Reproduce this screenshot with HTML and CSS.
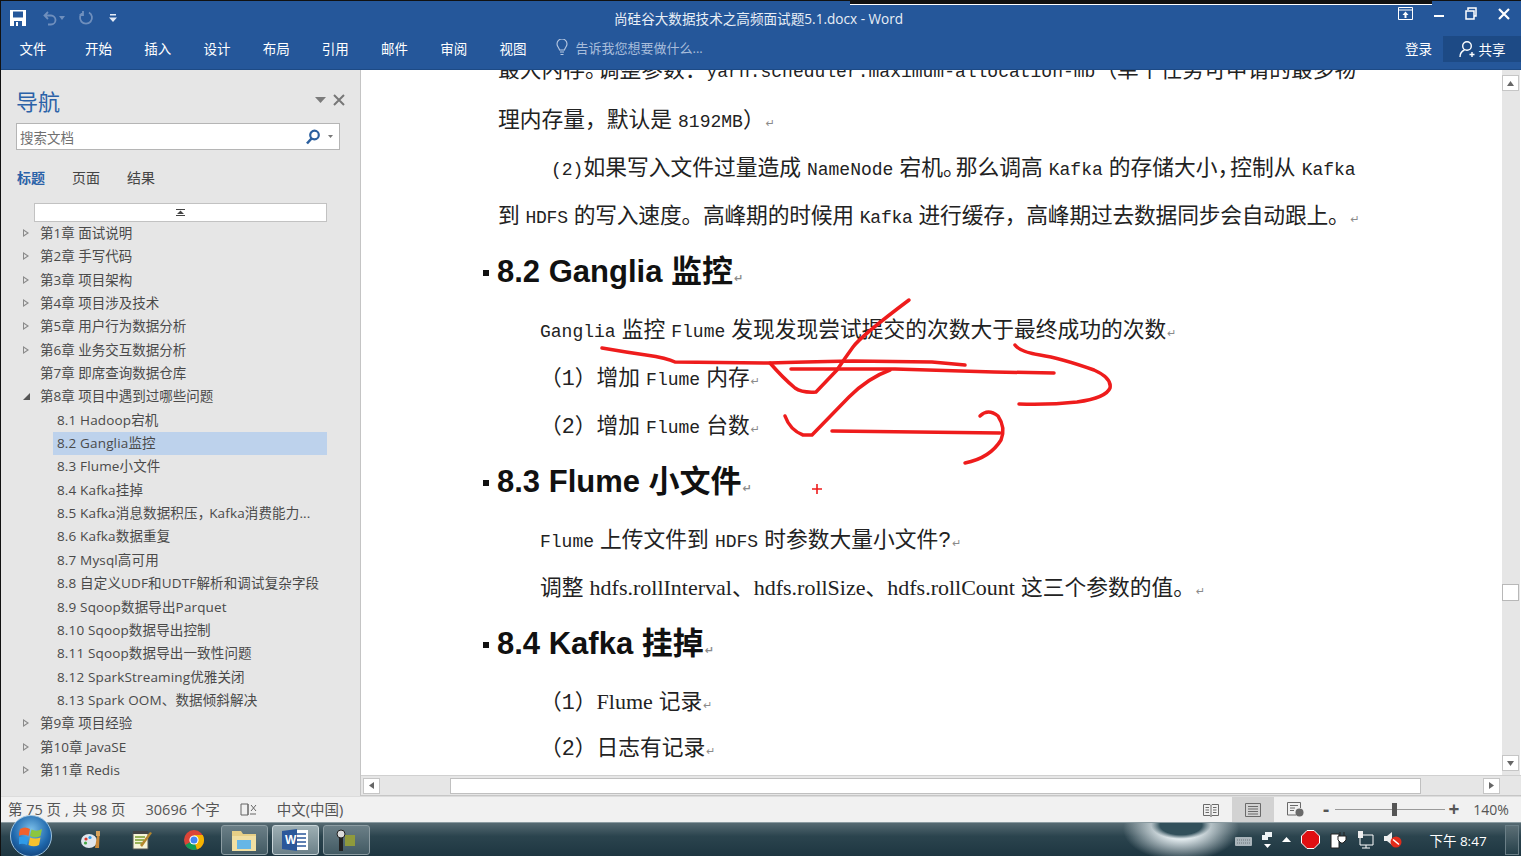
FILE: index.html
```html
<!DOCTYPE html>
<html lang="zh-CN">
<head>
  <meta charset="UTF-8">
  <title>尚硅谷大数据技术之高频面试题5.1.docx - Word</title>
  <link rel="stylesheet" href="styles.css">
</head>
<body>
  <div class="app">
    <!-- title bar -->
    <header class="titlebar">
      <div class="qat">
        <svg class="qat-save" width="18" height="18" viewBox="0 0 18 18"><path d="M1 1h16v16H1z" fill="#fff"/><path d="M4 2.500h10v6H4z" fill="#25579a"/><path d="M5 12h8v5H5z" fill="#25579a"/><path d="M7 13h2v4H7z" fill="#fff"/></svg>
        <svg class="qat-undo" width="14" height="16" viewBox="0 0 14 16"><path d="M5 2L1.500 5.500 5 9M2 5.500h6a4.500 4.500 0 0 1 0 9H5" fill="none" stroke="#6f8fbd" stroke-width="1.800"/></svg>
        <svg class="qat-drop" width="6" height="4" viewBox="0 0 6 4"><path d="M0 0h6L3 4z" fill="#6f8fbd"/></svg>
        <svg class="qat-redo" width="16" height="16" viewBox="0 0 16 16"><path d="M5 2.500a6 6 0 1 0 6 0M5 1v4H1.500" fill="none" stroke="#6f8fbd" stroke-width="1.800"/></svg>
        <svg class="qat-more" width="8" height="8" viewBox="0 0 8 8"><path d="M1 0h6v1.500H1zM0 3.500h8L4 8z" fill="#e4ebf5"/></svg>
      </div>
      <div class="doc-title">尚硅谷大数据技术之高频面试题5.1.docx - Word</div>
      <div class="screen-line"></div>
      <div class="winbtns">
        <svg width="15" height="13" viewBox="0 0 15 13"><path d="M.5.500h14v12H.500zM.5 3h14" fill="none" stroke="#fff"/><path d="M7.500 4.500L4.500 8H6.500V11H8.500V8H10.500z" fill="#fff"/></svg>
        <svg width="10" height="12" viewBox="0 0 10 12"><path d="M0 7h10v2H0z" fill="#fff"/></svg>
        <svg width="12" height="13" viewBox="0 0 12 13"><path d="M3 3V1h8v8H9M1 4h8v8H1z" fill="none" stroke="#fff" stroke-width="1.500"/></svg>
        <svg width="12" height="12" viewBox="0 0 12 12"><path d="M1 1l10 10M11 1L1 11" stroke="#fff" stroke-width="2.200"/></svg>
      </div>
    </header>

    <!-- ribbon tabs -->
    <nav class="tabs">
      <span class="tab tab-file">文件</span>
      <span class="tab">开始</span>
      <span class="tab">插入</span>
      <span class="tab">设计</span>
      <span class="tab">布局</span>
      <span class="tab">引用</span>
      <span class="tab">邮件</span>
      <span class="tab">审阅</span>
      <span class="tab">视图</span>
      <span class="tell">
        <svg width="12" height="17" viewBox="0 0 12 17"><path d="M3.500 11C3 8.500 1 7.500 1 5a5 5 0 0 1 10 0c0 2.500-2 3.500-2.500 6zM4 13h4M4.500 15.500h3" fill="none" stroke="#b8c9e2" stroke-width="1.100"/></svg>
        告诉我您想要做什么...
      </span>
      <span class="login">登录</span>
      <span class="share">
        <svg width="18" height="18" viewBox="0 0 18 18"><circle cx="8" cy="6" r="4.300" fill="none" stroke="#fff" stroke-width="1.400"/><path d="M1 17c0-4 2-6 4.500-7M13 12v5M10.500 14.500h5" fill="none" stroke="#fff" stroke-width="1.400"/></svg>
        共享
      </span>
    </nav>

    <div class="main">
      <!-- navigation pane -->
      <aside class="navpane">
        <div class="nav-head">
          <h1>导航</h1>
          <svg class="nav-drop" width="11" height="6" viewBox="0 0 11 6"><path d="M0 0h11L5.500 6z" fill="#7b7b7b"/></svg>
          <svg width="12" height="12" viewBox="0 0 12 12"><path d="M1 1l10 10M11 1L1 11" stroke="#777" stroke-width="2"/></svg>
        </div>
        <div class="searchbox">
          <span>搜索文档</span>
          <svg class="search-ico" width="16" height="16" viewBox="0 0 16 16"><circle cx="9.500" cy="6" r="4.300" fill="none" stroke="#2b5f9e" stroke-width="2.200"/><path d="M6.500 9.500L2 14.500" stroke="#2b5f9e" stroke-width="2.600"/></svg>
          <svg width="5" height="3" viewBox="0 0 5 3"><path d="M0 0h5L2.500 3z" fill="#777"/></svg>
        </div>
        <div class="nav-tabs">
          <span class="on">标题</span>
          <span>页面</span>
          <span>结果</span>
        </div>
        <div class="tree-scroll">
          <svg width="9" height="7" viewBox="0 0 9 7"><path d="M0 0h9v1H0zM4.500 1.500L8 5H1zM0 6h9v1H0z" fill="#444"/></svg>
        </div>
        <ul class="tree">
          <li class="closed">第1章 面试说明</li>
          <li class="closed">第2章 手写代码</li>
          <li class="closed">第3章 项目架构</li>
          <li class="closed">第4章 项目涉及技术</li>
          <li class="closed">第5章 用户行为数据分析</li>
          <li class="closed">第6章 业务交互数据分析</li>
          <li>第7章 即席查询数据仓库</li>
          <li class="open">第8章 项目中遇到过哪些问题</li>
          <li class="sub">8.1 Hadoop宕机</li>
          <li class="sub selected">8.2 Ganglia监控</li>
          <li class="sub">8.3 Flume小文件</li>
          <li class="sub">8.4 Kafka挂掉</li>
          <li class="sub">8.5 Kafka消息数据积压<span class="np">，</span>Kafka消费能力...</li>
          <li class="sub">8.6 Kafka数据重复</li>
          <li class="sub">8.7 Mysql高可用</li>
          <li class="sub">8.8 自定义UDF和UDTF解析和调试复杂字段</li>
          <li class="sub">8.9 Sqoop数据导出Parquet</li>
          <li class="sub">8.10 Sqoop数据导出控制</li>
          <li class="sub">8.11 Sqoop数据导出一致性问题</li>
          <li class="sub">8.12 SparkStreaming优雅关闭</li>
          <li class="sub">8.13 Spark OOM、数据倾斜解决</li>
          <li class="closed">第9章 项目经验</li>
          <li class="closed">第10章 JavaSE</li>
          <li class="closed">第11章 Redis</li>
        </ul>
      </aside>

      <!-- document -->
      <section class="docarea">
        <div class="docview">
          <div class="page">
            <p class="line">最大内存<span class="pw">。</span>调整参数：<span class="en">yarn.scheduler.maximum-allocation-mb</span>（单个任务可申请的最多物</p>
            <p class="line">理内存量，默认是 <span class="en">8192MB</span>）<i class="mark">↵</i></p>
            <p class="line ind-w"><span class="en">(2)</span>如果写入文件过量造成 <span class="en">NameNode</span> 宕机<span class="pw">。</span>那么调高 <span class="en">Kafka</span> 的存储大小<span class="pw">，</span>控制从 <span class="en">Kafka</span></p>
            <p class="line tight">到 <span class="en">HDFS</span> 的写入速度。高峰期的时候用 <span class="en">Kafka</span> 进行缓存，高峰期过去数据同步会自动跟上。<i class="mark">↵</i></p>
            <h2 class="head">8.2 Ganglia 监控<i class="mark">↵</i></h2>
            <p class="line ind"><span class="en">Ganglia</span> 监控 <span class="en">Flume</span> 发现发现尝试提交的次数大于最终成功的次数<i class="mark">↵</i></p>
            <p class="line ind">（1）增加 <span class="en">Flume</span> 内存<i class="mark">↵</i></p>
            <p class="line ind">（2）增加 <span class="en">Flume</span> 台数<i class="mark">↵</i></p>
            <h2 class="head">8.3 Flume 小文件<i class="mark">↵</i></h2>
            <p class="line ind"><span class="en">Flume</span> 上传文件到 <span class="en">HDFS</span> 时参数大量小文件?<i class="mark">↵</i></p>
            <p class="line ind raised">调整 <span class="tm">hdfs.rollInterval</span>、<span class="tm">hdfs.rollSize</span>、<span class="tm">hdfs.rollCount</span> 这三个参数的值。<i class="mark">↵</i></p>
            <h2 class="head">8.4 Kafka 挂掉<i class="mark">↵</i></h2>
            <p class="line ind raised">（1）<span class="tm">Flume</span> 记录<i class="mark">↵</i></p>
            <p class="line ind raised">（2）日志有记录<i class="mark">↵</i></p>
          </div>
          <div class="vscroll">
            <span class="sbtn"><svg width="7" height="5" viewBox="0 0 7 5"><path d="M3.500 0L7 5H0z" fill="#666"/></svg></span>
            <span class="vthumb"></span>
            <span class="sbtn"><svg width="7" height="5" viewBox="0 0 7 5"><path d="M0 0h7L3.500 5z" fill="#666"/></svg></span>
          </div>
          <!-- screen annotation drawn over the document -->
          <svg class="ink" width="1160" height="726" viewBox="361 70 1160 726">
            <g fill="none" stroke="#ee1c1c" stroke-width="3.500" stroke-linejoin="round" stroke-linecap="round">
              <path d="M602 348Q625 352 646 355T675 362L770 363Q800 362 853 361L932 362 965 365"/>
              <path d="M770 363Q783 378 795 388Q802 393 816 392L837 370Q845 358 853 347T909 300"/>
              <path d="M791 369L895 369 994 372 1054 373"/>
              <path d="M1015 345Q1020 352 1040 355T1094 370Q1112 378 1110 388Q1106 398 1077 402Q1050 405 1019 404"/>
              <path d="M785 416Q790 430 803 435H812L849 397Q868 378 890 370"/>
              <path d="M832 431L1000 433"/>
              <path d="M980 416Q988 408 998 416Q1006 428 1001 440Q990 458 965 463"/>
              <path d="M812 489H822M817 484V494" stroke-width="1.600" stroke-linecap="butt"/>
            </g>
          </svg>
        </div>
        <div class="hscroll">
          <span class="sbtn"><svg width="5" height="7" viewBox="0 0 5 7"><path d="M5 0v7L0 3.500z" fill="#666"/></svg></span>
          <span class="hthumb"></span>
          <span class="sbtn"><svg width="5" height="7" viewBox="0 0 5 7"><path d="M0 0v7l5-3.500z" fill="#666"/></svg></span>
        </div>
      </section>
    </div>

    <!-- status bar -->
    <footer class="status">
      <span>第 75 页 , 共 98 页</span>
      <span>30696 个字</span>
      <svg width="17" height="15" viewBox="0 0 17 15"><path d="M8 2H1v11h7zM8 2v11" fill="none" stroke="#666"/><path d="M11 3l5 6M16 3l-5 6M10 12h6" stroke="#666" fill="none"/></svg>
      <span>中文(中国)</span>
      <div class="st-right">
        <span class="view"><svg width="16" height="14" viewBox="0 0 16 14"><path d="M.5 1.500h6.500L8 2.500l1-1h6.500v11H9L8 13.500l-1-1H.500zM8 2.500v11M2.500 4.500h3.500M2.500 7h3.500M2.500 9.500h3.500M10 4.500h3.500M10 7h3.500M10 9.500h3.500" fill="none" stroke="#6a6a6a"/></svg></span>
        <span class="view active"><svg width="16" height="14" viewBox="0 0 16 14"><path d="M.5.500h15v13H.500zM3 3.500h10M3 6h10M3 8.500h10M3 11h10" fill="none" stroke="#6a6a6a"/></svg></span>
        <span class="view"><svg width="17" height="15" viewBox="0 0 17 15"><path d="M9 13H.5V.500h13V6M3 3.500h8M3 6h5M3 8.500h4" fill="none" stroke="#6a6a6a"/><circle cx="12.500" cy="10.500" r="4" fill="#6a6a6a"/></svg></span>
        <div class="zoom">
          <span class="zm-sign">-</span>
          <div class="zm-track"><span class="zm-thumb"></span></div>
          <span class="zm-sign">+</span>
        </div>
        <span class="zm-val">140%</span>
      </div>
    </footer>

    <!-- windows taskbar -->
    <div class="taskbar">
      <div class="orb">
        <svg width="24" height="22" viewBox="0 0 24 22"><path d="M1 4q5-3 10 0l-1.500 7q-5-2.500-10 0z" fill="#f0612c"/><path d="M12.500 4.500q5 2.500 10.500-.5l-1.500 7q-5 2.500-10.500 0z" fill="#8cc63f"/><path d="M-.5 12.500q5-2 10 0L8 20q-5-2.500-10 0z" fill="#2f9be8"/><path d="M11 12.500q5 2 10.500 0L20 20q-5 2.500-10.500 0z" fill="#f7c12d"/></svg>
      </div>
      <span class="pin pin-paint"><svg width="20" height="20" viewBox="0 0 20 20"><ellipse cx="8" cy="11" rx="8" ry="7" fill="#dfe6ee"/><circle cx="5" cy="9" r="1.600" fill="#d9382b"/><circle cx="9" cy="7.500" r="1.600" fill="#2f9be8"/><circle cx="4.500" cy="13" r="1.600" fill="#45a845"/><path d="M14 18l2-12h2.500L18 18z" fill="#c9893a"/><path d="M15 1h4v5h-4z" fill="#d7a35c"/></svg></span>
      <span class="pin"><svg width="20" height="22" viewBox="0 0 20 22"><path d="M1 4h15v16H1z" fill="#f6f4d8" stroke="#555"/><path d="M1 2h15v3H1z" fill="#444"/><path d="M3 8h10M3 11h9M3 14h7" stroke="#7a9c2e" stroke-width="1.500"/><path d="M8 16L18 3l2 1L10 18z" fill="#b5862d"/></svg></span>
      <span class="pin"><svg width="20" height="20" viewBox="0 0 20 20"><circle cx="10" cy="10" r="10" fill="#db4437"/><path d="M10 10L1.300 15A10 10 0 0 0 13 19.500z" fill="#0f9d58"/><path d="M10 5h8.700A10 10 0 0 1 13 19.500L10 10z" fill="#f4b400"/><circle cx="10" cy="10" r="4.600" fill="#fff"/><circle cx="10" cy="10" r="3.500" fill="#4285f4"/></svg></span>
      <div class="tasks">
        <span class="task"><svg width="26" height="24" viewBox="0 0 26 24"><path d="M1 3h9l2 3h13v17H1z" fill="#e7cf86"/><path d="M1 8h24v15H1z" fill="#f1dfa2"/><path d="M6 12h14v9H6z" fill="#66b6e6"/></svg></span>
        <span class="task current"><svg width="28" height="24" viewBox="0 0 28 24"><path d="M12 2h15v20H12z" fill="#fff"/><path d="M15 6h10M15 10h10M15 14h10M15 18h10" stroke="#2b579a" stroke-width="1.500"/><path d="M1 3l15-2v22L1 21z" fill="#2b579a"/><text x="4" y="16" class="wlogo">W</text></svg></span>
        <span class="task"><svg width="20" height="24" viewBox="0 0 20 24"><circle cx="5" cy="6" r="4" fill="#dcdcdc" stroke="#222"/><path d="M3 10h4v13H3z" fill="#222"/><path d="M9 7h10v11H9z" fill="#8f9a3c"/></svg></span>
      </div>
      <div class="tray">
        <svg width="17" height="12" viewBox="0 0 17 12"><rect y="3" width="17" height="9" rx="1" fill="#a9b4ba"/><path d="M2 6h13M2 9h13" stroke="#6d777c" stroke-dasharray="1 1"/></svg>
        <span class="tray-stack">
          <svg width="10" height="8" viewBox="0 0 10 8"><path d="M3 0h7v5H3zM0 3h6v5H0z" fill="#eef3f5"/></svg>
          <svg width="7" height="4" viewBox="0 0 7 4"><path d="M0 0h7L3.500 4z" fill="#fff"/></svg>
        </span>
        <svg width="9" height="5" viewBox="0 0 9 5"><path d="M4.500 0L9 5H0z" fill="#fff"/></svg>
        <svg width="19" height="19" viewBox="0 0 19 19"><path d="M6 .5h7L18.500 6v7L13 18.500H6L.5 13V6z" fill="#e00f12" stroke="#fff"/></svg>
        <svg width="17" height="18" viewBox="0 0 17 18"><path d="M1 3h8v14H1z" fill="#fff" stroke="#222"/><path d="M10 1v4M14 1v4M8 5h8v4l-3 3h-2L8 9z" fill="#fff" stroke="#222"/></svg>
        <svg width="17" height="18" viewBox="0 0 17 18"><path d="M3 4h13v10H3zM9 14v3M5 17h8" fill="none" stroke="#fff"/><path d="M1 0h5v7H1z" fill="#eee"/></svg>
        <svg width="18" height="17" viewBox="0 0 18 17"><path d="M0 5h3l5-4v13L3 10H0z" fill="#eee"/><circle cx="12" cy="11" r="5.500" fill="#e32b1a"/><path d="M9 8.500l6 5" stroke="#fff" stroke-width="1.600"/></svg>
        <span class="clock">下午 8:47</span>
        <span class="showdesk"></span>
      </div>
    </div>
  </div>
</body>
</html>
```

FILE: styles.css
```css
* { box-sizing:border-box; }
html, body { margin:0; padding:0; height:100%; overflow:hidden; }
body { font-family:"Open Sans","Noto Sans CJK SC",sans-serif; background:#000; }
.app { width:1521px; height:856px; display:flex; flex-direction:column; border-left:1px solid #111; position:relative; }

/* title bar */
.titlebar { height:34px; background:#25579a; display:flex; align-items:center; color:#e8eef6; position:relative; border-top:1px solid #111; flex:none; }
.qat { display:flex; align-items:center; width:580px; padding-left:8px; }
.qat-undo { margin-left:16px; }
.qat-drop { margin-left:2px; }
.qat-redo { margin-left:13px; }
.qat-more { margin-left:15px; }
.doc-title { font-size:13.600px; width:400px; margin-left:33px; white-space:nowrap; }
.screen-line { position:absolute; top:0; left:849px; width:582px; height:4px; background:#111; border-bottom:1px solid #fff; }
.winbtns { margin-left:auto; display:flex; align-items:center; gap:21px; padding-right:11px; height:100%; padding-bottom:8px; }

/* ribbon tabs */
.tabs { height:36px; background:#25579a; display:flex; align-items:flex-start; color:#fff; font-size:13.500px; flex:none; border-bottom:1px solid #1d4a85; padding-top:4px; }
.tab { width:59.200px; text-align:center; white-space:nowrap; }
.tab-file { width:68px; padding-right:4px; }
.tell { margin-left:13px; display:flex; align-items:center; gap:8px; color:#a8bddb; font-size:13px; }
.login { margin-left:auto; margin-right:11px; }
.share { width:78px; height:26px; margin-top:-2px; background:#1d4a85; display:flex; align-items:center; justify-content:center; gap:2px; }

/* layout */
.main { flex:1; display:flex; min-height:0; background:#fff; }

/* navigation pane */
.navpane { width:360px; flex:none; background:#e6e6e6; border-right:1px solid #c4c4c4; padding:0 15px; overflow:hidden; }
.nav-head { display:flex; align-items:center; height:53px; padding-top:6px; }
.nav-head h1 { font-size:22px; font-weight:400; color:#2b62a8; margin:0; flex:1; }
.nav-drop { margin-right:7px; }
.searchbox { height:27px; width:324px; background:#fff; border:1px solid #b5b5b5; display:flex; align-items:center; font-size:13.500px; color:#707070; padding:0 6px 0 3px; }
.searchbox span { flex:1; }
.search-ico { margin-right:7px; }
.nav-tabs { display:flex; gap:27px; font-size:14px; color:#444; height:53px; align-items:center; padding:0 1px 0; }
.nav-tabs .on { color:#2b62a8; font-weight:700; }
.tree-scroll { margin-left:18px; width:293px; height:19px; background:#fff; border:1px solid #c2c2c2; display:flex; align-items:center; justify-content:center; }
.tree { list-style:none; margin:0; padding:0; }
.tree li { height:23.350px; line-height:23.350px; font-size:13.500px; color:#4a4a4a; padding-left:24px; position:relative; white-space:nowrap; }
.tree li.sub { padding-left:4px; margin-left:37px; width:274px; letter-spacing:.15px; }
.tree li.selected { background:#bdd2ec; }
.tree li.closed::before { content:""; position:absolute; left:7px; top:7px; border-left:6px solid #8a8a8a; border-top:4.500px solid transparent; border-bottom:4.500px solid transparent; }
.tree li.closed::after { content:""; position:absolute; left:8px; top:9px; border-left:3.500px solid #e6e6e6; border-top:2.500px solid transparent; border-bottom:2.500px solid transparent; }
.tree li.open::before { content:""; position:absolute; left:7px; top:8px; border-right:7px solid #555; border-top:7px solid transparent; }
.np { letter-spacing:-2px; }

/* document */
.docarea { flex:1; display:flex; flex-direction:column; min-width:0; }
.docview { flex:1; display:flex; min-height:0; position:relative; overflow:hidden; }
.page { flex:1; overflow:hidden; padding-left:137px; color:#222; font-size:21.750px; word-spacing:-7px; font-family:"Liberation Mono","Noto Sans CJK SC",monospace; }
.line { height:48px; line-height:48px; padding-top:3px; margin:0; white-space:nowrap; }
.line:first-child { margin-top:-23px; padding-top:1px; }
.line.raised { padding-top:1px; }
.tight { letter-spacing:-.2px; }
.ind { padding-left:42px; }
.ind-w { padding-left:53px; }
.en { font-size:18px; }
.pw { letter-spacing:-9px; }
.tm { font-family:"Liberation Serif","Noto Sans CJK SC",serif; font-size:22px; }
.mark { font-style:normal; font-size:11px; color:#8a8a8a; font-family:"DejaVu Sans",sans-serif; margin-left:1px; }
.head { height:66px; line-height:66px; margin:0 0 0 -1px; font-family:"Liberation Sans","Noto Sans CJK SC",sans-serif; font-size:31px; font-weight:700; color:#111; word-spacing:0; position:relative; white-space:nowrap; }
.head::before { content:""; position:absolute; left:-14px; top:31px; width:6px; height:6px; background:#111; }
.vscroll { width:18px; flex:none; background:#e6e6e6; margin-right:1px; display:flex; flex-direction:column; padding-top:5px; }
.sbtn { width:17px; height:16px; background:#fff; border:1px solid #c6c6c6; display:flex; align-items:center; justify-content:center; flex:none; }
.vthumb { height:17px; width:17px; background:#fff; border:1px solid #b8b8b8; margin-top:493px; margin-bottom:auto; }
.vscroll .sbtn:last-child { margin-bottom:4px; }
.hscroll { height:21px; flex:none; background:#e6e6e6; display:flex; align-items:center; padding:0 21px 0 2px; border-top:1px solid #d0d0d0; border-bottom:1px solid #c6c6c6; }
.hthumb { width:971px; height:16px; background:#fff; border:1px solid #c0c0c0; margin:0 auto 0 70px; }
.ink { position:absolute; left:0; top:0; pointer-events:none; }

/* status bar */
.status { height:26px; background:#f1f1f1; display:flex; align-items:center; gap:20px; font-size:14.500px; color:#555; padding-left:7px; flex:none; border-top:1px solid #dcdcdc; }
.status > span { position:relative; top:-1px; white-space:nowrap; }
.st-right { margin-left:auto; display:flex; align-items:center; height:100%; }
.view { width:42px; height:100%; display:flex; align-items:center; justify-content:center; }
.view.active { background:#d2d2d2; }
.zoom { display:flex; align-items:center; margin-left:3px; gap:2px; }
.zm-sign { font-size:19px; font-weight:700; color:#555; width:14px; text-align:center; line-height:1; }
.zm-track { width:110px; height:1px; background:#9a9a9a; position:relative; }
.zm-thumb { position:absolute; left:57px; top:-6px; width:5px; height:13px; background:#555; }
.zm-val { width:60px; text-align:center; font-size:14px; }

/* windows taskbar */
.taskbar { height:34px; flex:none; display:flex; align-items:center; position:relative; background:radial-gradient(ellipse 30px 14px at 1180px 2px,#32505b 70%,rgba(50,80,91,0) 100%),radial-gradient(ellipse 58px 32px at 1180px 6px,#e8f0f3 30%,rgba(232,240,243,0) 100%),linear-gradient(#566a72,#2b444e 40%,#1e3641); border-top:1px solid #8b9ba1; }
.orb { width:42px; height:42px; border-radius:50%; margin-left:9px; margin-top:-8px; background:radial-gradient(circle at 50% 35%,#7cc0ea,#1f68ad 55%,#0c2f5f); border:1px solid #9cc3e0; display:flex; align-items:center; justify-content:center; flex:none; }
.pin { width:51.500px; display:flex; justify-content:center; flex:none; }
.pin-paint { margin-left:13px; }
.tasks { display:flex; gap:4px; margin-left:1px; }
.task { width:47px; height:30px; border:1px solid #8d9da3; border-radius:3px; background:linear-gradient(#6b7f87,#425a63); display:flex; align-items:center; justify-content:center; }
.task.current { background:linear-gradient(#9eafb4,#6b8088); border-color:#c8d4d8; }
.wlogo { font-family:"Liberation Sans",sans-serif; font-size:12px; font-weight:700; fill:#fff; }
.tray { margin-left:auto; display:flex; align-items:center; gap:10px; color:#fff; height:100%; }
.tray-stack { display:flex; flex-direction:column; align-items:center; gap:4px; }
.clock { font-size:13.500px; width:72px; text-align:center; white-space:nowrap; margin-left:10px; margin-right:1px; }
.showdesk { width:14px; height:30px; border:1px solid #6b7f87; background:linear-gradient(#5c6f76,#26404a); margin-right:2px; }
```
